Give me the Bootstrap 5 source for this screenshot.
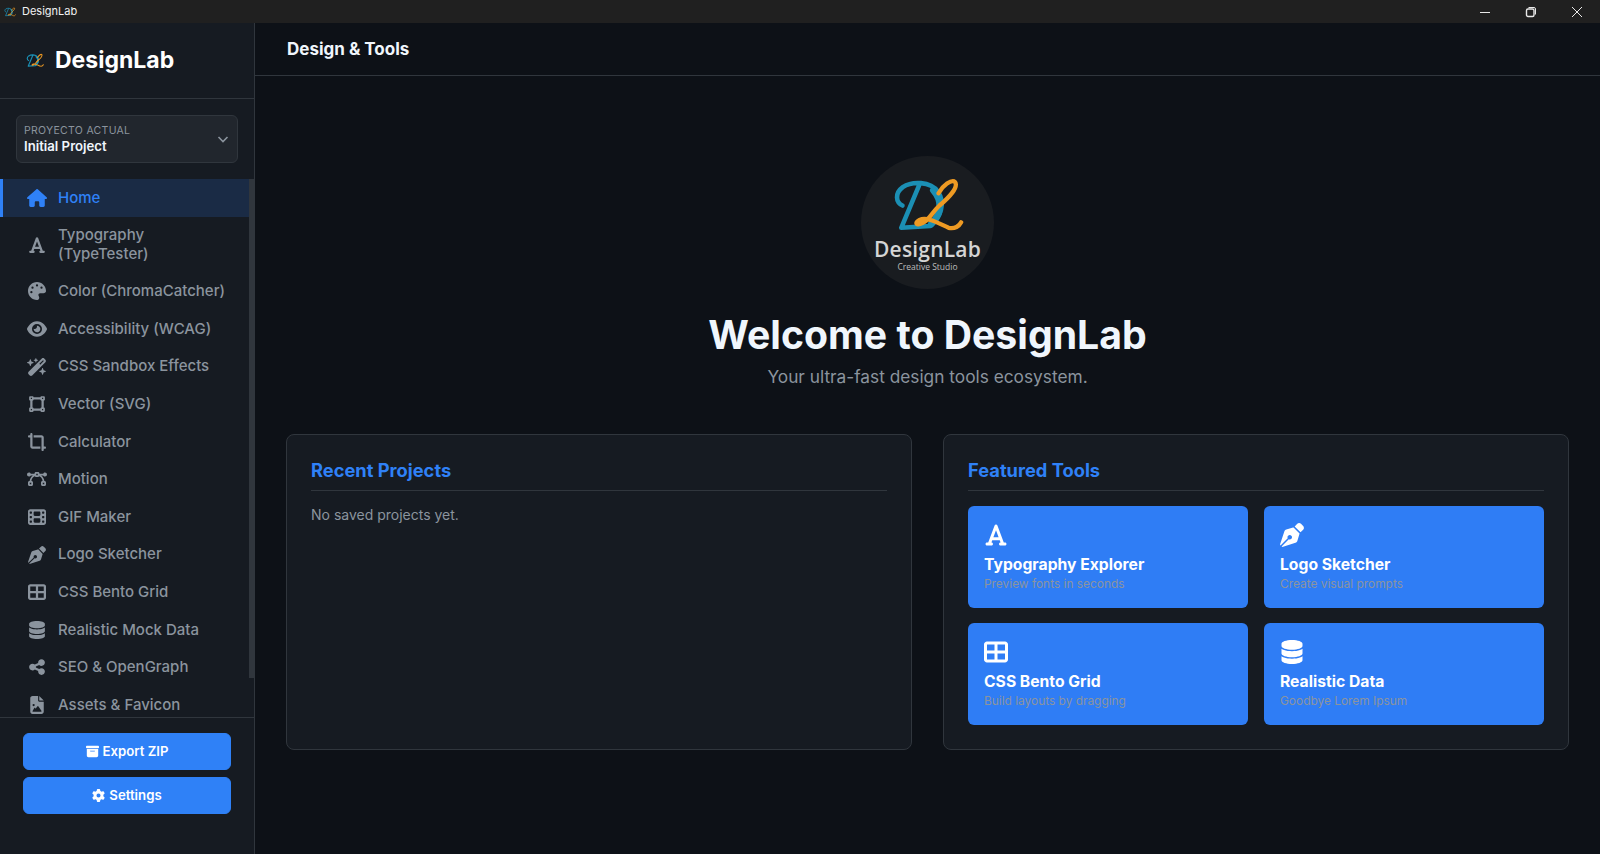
<!DOCTYPE html>
<html lang="en">
<head>
    <meta charset="UTF-8">
    <meta name="viewport" content="width=device-width, initial-scale=1.0">
    <title>DesignLab</title>
    <link href="https://cdn.jsdelivr.net/npm/bootstrap@5.3.0/dist/css/bootstrap.min.css" rel="stylesheet">
    <style>
        html, body { height: 100%; }
        body { background: #0d1117; color: #e6edf3; font-family: Inter, "Liberation Sans", sans-serif; overflow: hidden; }
        .ico { width: 1em; height: 1em; fill: currentColor; flex: none; }

        .titlebar { height: 23px; background: #202020; font-size: 11px; color: #f2f2f2; }
        .titlebar .brand-mini { width: 12px; height: 10px; margin: 0 6px 0 4px; }
        .win-btn { width: 46px; height: 23px; color: #e8e8e8; }
        .win-btn svg { width: 12px; height: 12px; fill: none; stroke: currentColor; stroke-width: 1; }

        .app { height: calc(100% - 23px); }
        .sidebar { width: 255px; background: #161b22; border-right: 1px solid #30363d; }
        .side-head { height: 76px; padding-left: 26px; gap: 11px; border-bottom: 1px solid #30363d; }
        .side-head .brand-mini { width: 18px; height: 15px; }
        .side-head span { font-size: 23px; font-weight: 700; color: #fff; }
        .project-wrap { padding: 16px 16px 16px; }
        .project { height: 48px; padding: 0 8px 0 7px; background: #21262d; border: 1px solid #30363d; border-radius: 6px; }
        .project small { display: block; font-size: 10.5px; line-height: 13px; letter-spacing: .3px; color: #8b949e; }
        .project strong { display: block; font-size: 13.2px; line-height: 18px; font-weight: 600; color: #f0f6fc; }
        .project svg { width: 12px; height: 12px; fill: none; stroke: #8b949e; stroke-width: 1.6; }

        .nav-wrap { flex: 1 1 0; min-height: 0; overflow: hidden; }
        .nav-wrap .side-nav { flex-wrap: nowrap; }
        .scroll-thumb { top: 0; right: 0; width: 5px; height: 499px; background: #30363d; }
        .side-nav .nav-link { display: flex; align-items: center; gap: 11px; padding: 9.6px 29px 9.6px 24px; flex: none; font-size: 15px; line-height: 18.4px; font-weight: 500; color: #8b949e; border-left: 3px solid transparent; }
        .side-nav .nav-link .ico { width: 20px; height: 18px; }
        .side-nav .nav-link.active { color: #2f81f7; background: #1a2b45; border-left-color: #2f81f7; }

        .side-foot { border-top: 1px solid #30363d; padding: 15px 23px 40px; gap: 7px; }
        .btn-brand { --bs-btn-bg: #2f81f7; --bs-btn-border-color: #2f81f7; --bs-btn-hover-bg: #2f81f7; --bs-btn-hover-border-color: #2f81f7; --bs-btn-color: #fff; --bs-btn-hover-color: #fff; height: 37px; font-size: 13.2px; font-weight: 600; padding: 0; border-radius: 6px; gap: 4px; }
        .btn-brand .ico { width: 13px; height: 13px; }

        .top-head { height: 53px; padding-left: 32px; border-bottom: 1px solid #30363d; }
        .top-head h2 { font-size: 17px; font-weight: 700; margin: 0; color: #f0f6fc; }
        .content { padding: 80px 31px 0; }

        .logo-disc { width: 133px; height: 133px; border-radius: 50%; background: #191c20; padding-top: 4px; }
        .logo-disc svg { width: 72px; height: 55px; }
        .logo-name { font-family: "Open Sans", sans-serif; font-size: 21px; line-height: 24px; font-weight: 600; letter-spacing: .2px; color: #d4d4d4; margin-top: 4px; }
        .logo-sub { font-family: "Open Sans", sans-serif; font-size: 8.5px; line-height: 11px; color: #bdbdbd; }
        .hero h1 { font-size: 39.2px; line-height: 48px; font-weight: 700; margin: 22px 0 0; color: #f0f6fc; }
        .hero p { font-size: 17.3px; line-height: 24px; margin: 6px 0 0; color: #8b949e; }

        .panels { --bs-gutter-x: 31px; margin-top: 45px; }
        .panel { height: 316px; padding: 25px 24px 24px; background: #161b22; border: 1px solid #30363d; border-radius: 8px; }
        .panel h3 { font-size: 18.3px; line-height: 21.6px; font-weight: 700; color: #2f81f7; padding-bottom: 8px; margin-bottom: 15px; border-bottom: 1px solid #30363d; }
        .panel p { font-size: 14px; color: #8b949e; margin: -2px 0 0; }

        .tools { --bs-gutter-x: 16px; --bs-gutter-y: 15px; }
        .tool { height: 102px; padding: 17px 16px 0; background: #2f7df5; border-radius: 6px; color: #fff; }
        .tool .ico { display: block; width: 24px; height: 24px; }
        .tool h4 { font-size: 15.7px; line-height: 20px; font-weight: 700; margin: 8px 0 0; }
        .tool small { display: block; font-size: 11.9px; line-height: 16px; margin-top: 1px; color: #8b949e; }
    </style>
</head>
<body>
    <!-- iconos -->
    <svg class="d-none" xmlns="http://www.w3.org/2000/svg">
        <symbol id="i-home" viewBox="0 0 576 512"><path d="M575.8 255.5c0 18-13.5 32.1-32 32.1h-32l.7 160.2c0 2.7-.2 5.4-.5 8.1V472c0 22.1-17.9 40-40 40H456c-1.1 0-2.2 0-3.3-.1c-1.4 .1-2.8 .1-4.2 .1H416 392c-22.1 0-40-17.9-40-40V448 384c0-17.7-14.3-32-32-32H256c-17.7 0-32 14.3-32 32v64 24c0 22.1-17.9 40-40 40H160 128.1c-1.5 0-3-.1-4.5-.2c-1.2 .1-2.4 .2-3.6 .2H104c-22.1 0-40-17.9-40-40V360c0-.9 0-1.9 .1-2.8V287.6H32c-18 0-32-14-32-32.1c0-9 3-17 10-24L266.4 8c7-7 15-8 22-8s15 2 21 7L564.8 231.5c8 7 12 15 11 24z"/></symbol>
        <symbol id="i-font" viewBox="0 0 448 512"><path d="M254 52.8C249.3 40.3 237.3 32 224 32s-25.3 8.3-30 20.8L57.8 416H32c-17.7 0-32 14.3-32 32s14.3 32 32 32h96c17.7 0 32-14.3 32-32s-14.3-32-32-32h-1.8l18-48H303.8l18 48H320c-17.7 0-32 14.3-32 32s14.3 32 32 32h96c17.7 0 32-14.3 32-32s-14.3-32-32-32H390.2L254 52.8zM279.8 304H168.2L224 155.1 279.8 304z"/></symbol>
        <symbol id="i-palette" viewBox="0 0 512 512"><path d="M512 256c0 .9 0 1.8 0 2.7c-.4 36.5-33.6 61.3-70.1 61.3H344c-26.5 0-48 21.5-48 48c0 3.4 .4 6.7 1 9.9c2.1 10.2 6.5 20 10.8 29.9c6.1 13.8 12.1 27.5 12.1 42c0 31.8-21.6 60.7-53.4 62c-3.5 .1-7 .2-10.6 .2C114.6 512 0 397.4 0 256S114.6 0 256 0S512 114.6 512 256zM128 288a32 32 0 1 0 -64 0 32 32 0 1 0 64 0zm0-96a32 32 0 1 0 0-64 32 32 0 1 0 0 64zM288 96a32 32 0 1 0 -64 0 32 32 0 1 0 64 0zm96 96a32 32 0 1 0 0-64 32 32 0 1 0 0 64z"/></symbol>
        <symbol id="i-eye" viewBox="0 0 576 512"><path d="M288 32c-80.8 0-145.5 36.8-192.6 80.6C48.6 156 17.3 208 2.5 243.7c-3.3 7.9-3.3 16.7 0 24.6C17.3 304 48.6 356 95.4 399.4C142.5 443.2 207.2 480 288 480s145.5-36.8 192.6-80.6c46.8-43.5 78.1-95.4 93-131.1c3.3-7.9 3.3-16.7 0-24.6c-14.9-35.7-46.2-87.7-93-131.1C433.5 68.8 368.8 32 288 32zM144 256a144 144 0 1 1 288 0 144 144 0 1 1 -288 0zm144-64c0 35.3-28.7 64-64 64c-7.1 0-13.9-1.2-20.3-3.3c-5.5-1.8-11.9 1.6-11.7 7.4c.3 6.9 1.3 13.8 3.2 20.7c13.7 51.2 66.4 81.6 117.6 67.9s81.6-66.4 67.9-117.6c-11.1-41.5-47.8-69.4-88.6-71.1c-5.8-.2-9.2 6.1-7.4 11.7c2.1 6.4 3.3 13.2 3.3 20.3z"/></symbol>
        <symbol id="i-wand" viewBox="0 0 576 512"><path d="M234.7 42.7L197 56.8c-3 1.1-5 4-5 7.2s2 6.1 5 7.2l37.7 14.1L248.8 123c1.1 3 4 5 7.2 5s6.1-2 7.2-5l14.1-37.7L315 71.2c3-1.1 5-4 5-7.2s-2-6.1-5-7.2L277.3 42.7 263.2 5c-1.1-3-4-5-7.2-5s-6.1 2-7.2 5L234.7 42.7zM46.1 395.4c-18.7 18.7-18.7 49.1 0 67.9l34.6 34.6c18.7 18.7 49.1 18.7 67.9 0L529.9 116.5c18.7-18.7 18.7-49.1 0-67.9L495.3 14.1c-18.7-18.7-49.1-18.7-67.9 0L46.1 395.4zM484.6 82.6l-105 105-23.3-23.3 105-105 23.3 23.3zM7.5 117.2C3 118.9 0 123.2 0 128s3 9.1 7.5 10.8L64 160l21.2 56.5c1.7 4.5 6 7.5 10.8 7.5s9.1-3 10.8-7.5L128 160l56.5-21.2c4.5-1.7 7.5-6 7.5-10.8s-3-9.1-7.5-10.8L128 96 106.8 39.5C105.1 35 100.8 32 96 32s-9.1 3-10.8 7.5L64 96 7.5 117.2zm352 256c-4.5 1.7-7.5 6-7.5 10.8s3 9.1 7.5 10.8L416 416l21.2 56.5c1.7 4.5 6 7.5 10.8 7.5s9.1-3 10.8-7.5L480 416l56.5-21.2c4.5-1.7 7.5-6 7.5-10.8s-3-9.1-7.5-10.8L480 352l-21.2-56.5c-1.7-4.5-6-7.5-10.8-7.5s-9.1 3-10.8 7.5L416 352l-56.5 21.2z"/></symbol>
        <symbol id="i-vector" viewBox="0 0 448 512"><path d="M368 80h32v32H368V80zM352 32c-17.7 0-32 14.3-32 32H128c0-17.7-14.3-32-32-32H32C14.3 32 0 46.3 0 64v64c0 17.7 14.3 32 32 32V352c-17.7 0-32 14.3-32 32v64c0 17.7 14.3 32 32 32H96c17.7 0 32-14.3 32-32H320c0 17.7 14.3 32 32 32h64c17.7 0 32-14.3 32-32V384c0-17.7-14.3-32-32-32V160c17.7 0 32-14.3 32-32V64c0-17.7-14.3-32-32-32H352zM96 160c17.7 0 32-14.3 32-32H320c0 17.7 14.3 32 32 32V352c-17.7 0-32 14.3-32 32H128c0-17.7-14.3-32-32-32V160zM48 400H80v32H48V400zm320 32V400h32v32H368zM48 112V80H80v32H48z"/></symbol>
        <symbol id="i-crop" viewBox="0 0 512 512"><path d="M128 32c0-17.7-14.3-32-32-32S64 14.3 64 32V64H32C14.3 64 0 78.3 0 96s14.3 32 32 32H64V384c0 35.3 28.7 64 64 64H352V384H128V32zM384 480c0 17.7 14.3 32 32 32s32-14.3 32-32V448h32c17.7 0 32-14.3 32-32s-14.3-32-32-32H448l0-256c0-35.3-28.7-64-64-64L160 64v64l224 0 0 352z"/></symbol>
        <symbol id="i-bezier" viewBox="0 0 640 512"><path d="M296 136V88h48v48H296zM288 32c-26.5 0-48 21.5-48 48v4H121.6C111.2 62.7 89.3 48 64 48C28.7 48 0 76.7 0 112s28.7 64 64 64c25.3 0 47.2-14.7 57.6-36h66.9c-58.9 39.6-98.9 105-104 180H80c-26.5 0-48 21.5-48 48v64c0 26.5 21.5 48 48 48h64c26.5 0 48-21.5 48-48V368c0-26.5-21.5-48-48-48h-3.3c5.9-67 48.5-123.4 107.5-149.1c8.6 12.7 23.2 21.1 39.8 21.1h64c16.6 0 31.1-8.4 39.8-21.1c59 25.7 101.6 82.1 107.5 149.1H496c-26.5 0-48 21.5-48 48v64c0 26.5 21.5 48 48 48h64c26.5 0 48-21.5 48-48V368c0-26.5-21.5-48-48-48h-4.7c-5-75-45.1-140.4-104-180h66.9c10.4 21.3 32.3 36 57.6 36c35.3 0 64-28.7 64-64s-28.7-64-64-64c-25.3 0-47.2 14.7-57.6 36H400V80c0-26.5-21.5-48-48-48H288zM88 376h48v48H88V376zm416 48V376h48v48H504z"/></symbol>
        <symbol id="i-film" viewBox="0 0 512 512"><path d="M0 96C0 60.7 28.7 32 64 32H448c35.3 0 64 28.7 64 64V416c0 35.3-28.7 64-64 64H64c-35.3 0-64-28.7-64-64V96zM48 368v32c0 8.8 7.2 16 16 16H96c8.8 0 16-7.2 16-16V368c0-8.8-7.2-16-16-16H64c-8.8 0-16 7.2-16 16zm368-16c-8.8 0-16 7.2-16 16v32c0 8.8 7.2 16 16 16h32c8.8 0 16-7.2 16-16V368c0-8.8-7.2-16-16-16H416zM48 240v32c0 8.8 7.2 16 16 16H96c8.8 0 16-7.2 16-16V240c0-8.8-7.2-16-16-16H64c-8.8 0-16 7.2-16 16zm368-16c-8.8 0-16 7.2-16 16v32c0 8.8 7.2 16 16 16h32c8.8 0 16-7.2 16-16V240c0-8.8-7.2-16-16-16H416zM48 112v32c0 8.8 7.2 16 16 16H96c8.8 0 16-7.2 16-16V112c0-8.8-7.2-16-16-16H64c-8.8 0-16 7.2-16 16zM416 96c-8.8 0-16 7.2-16 16v32c0 8.8 7.2 16 16 16h32c8.8 0 16-7.2 16-16V112c0-8.8-7.2-16-16-16H416zM160 128v64c0 17.7 14.3 32 32 32H320c17.7 0 32-14.3 32-32V128c0-17.7-14.3-32-32-32H192c-17.7 0-32 14.3-32 32zm32 160c-17.7 0-32 14.3-32 32v64c0 17.7 14.3 32 32 32H320c17.7 0 32-14.3 32-32V320c0-17.7-14.3-32-32-32H192z"/></symbol>
        <symbol id="i-pen" viewBox="0 0 512 512"><path d="M368.4 18.3L312.7 74.1 437.9 199.3l55.7-55.7c21.9-21.9 21.9-57.3 0-79.2L447.6 18.3c-21.9-21.9-57.3-21.9-79.2 0zM288 94.6l-9.2 2.8L134.7 140.6c-19.9 6-35.7 21.2-42.3 41L3.8 445.8c-3.8 11.3-1 23.9 7.3 32.4L164.7 324.7c-3-6.3-4.7-13.3-4.7-20.7c0-26.5 21.5-48 48-48s48 21.5 48 48s-21.5 48-48 48c-7.4 0-14.4-1.7-20.7-4.7L33.7 500.9c8.6 8.3 21.1 11.2 32.4 7.3l264.3-88.6c19.7-6.6 35-22.4 41-42.3l43.2-144.1 2.8-9.2L288 94.6z"/></symbol>
        <symbol id="i-grid" viewBox="0 0 512 512"><path d="M448 96V224H288V96H448zm0 192V416H288V288H448zM224 224H64V96H224V224zM64 288H224V416H64V288zM64 32C28.7 32 0 60.7 0 96V416c0 35.3 28.7 64 64 64H448c35.3 0 64-28.7 64-64V96c0-35.3-28.7-64-64-64H64z"/></symbol>
        <symbol id="i-db" viewBox="0 0 448 512"><path d="M448 80v48c0 44.2-100.3 80-224 80S0 172.2 0 128V80C0 35.8 100.3 0 224 0S448 35.8 448 80zM393.2 214.7c20.8-7.4 39.9-16.9 54.8-28.6V288c0 44.2-100.3 80-224 80S0 332.2 0 288V186.1c14.9 11.8 34 21.2 54.8 28.6C99.7 230.7 159.5 240 224 240s124.3-9.3 169.2-25.3zM0 346.1c14.9 11.8 34 21.2 54.8 28.6C99.7 390.7 159.5 400 224 400s124.3-9.3 169.2-25.3c20.8-7.4 39.9-16.9 54.8-28.6V432c0 44.2-100.3 80-224 80S0 476.2 0 432V346.1z"/></symbol>
        <symbol id="i-share" viewBox="0 0 448 512"><path d="M352 224c53 0 96-43 96-96s-43-96-96-96s-96 43-96 96c0 4 .2 8 .7 11.9l-94.1 47C145.4 170.2 121.9 160 96 160c-53 0-96 43-96 96s43 96 96 96c25.9 0 49.4-10.2 66.6-26.9l94.1 47c-.5 3.9-.7 7.8-.7 11.9c0 53 43 96 96 96s96-43 96-96s-43-96-96-96c-25.9 0-49.4 10.2-66.6 26.9l-94.1-47c.5-3.9 .7-7.8 .7-11.9s-.2-8-.7-11.9l94.1-47C302.6 213.8 326.1 224 352 224z"/></symbol>
        <symbol id="i-file" viewBox="0 0 384 512"><path d="M64 0C28.7 0 0 28.7 0 64V448c0 35.3 28.7 64 64 64H320c35.3 0 64-28.7 64-64V160H256c-17.7 0-32-14.3-32-32V0H64zM256 0V128H384L256 0zM64 256a32 32 0 1 1 64 0 32 32 0 1 1 -64 0zm152 32c5.3 0 10.2 2.6 13.2 6.9l88 128c3.4 4.9 3.7 11.3 1 16.5s-8.2 8.6-14.2 8.6H216 176 128 80c-5.8 0-11.1-3.1-13.9-8.1s-2.8-11.2 .2-16.1l48-80c2.9-4.8 8.1-7.8 13.7-7.8s10.8 2.9 13.7 7.8l12.8 21.4 48.3-70.2c3-4.3 7.9-6.9 13.2-6.9z"/></symbol>
        <symbol id="i-box" viewBox="0 0 512 512"><path d="M32 32H480c17.7 0 32 14.3 32 32V96c0 17.7-14.3 32-32 32H32C14.3 128 0 113.7 0 96V64C0 46.3 14.3 32 32 32zm0 128H480V416c0 35.3-28.7 64-64 64H96c-35.3 0-64-28.7-64-64V160zm128 80c0 8.8 7.2 16 16 16H336c8.8 0 16-7.2 16-16s-7.2-16-16-16H176c-8.8 0-16 7.2-16 16z"/></symbol>
        <symbol id="i-gear" viewBox="0 0 512 512"><path d="M495.9 166.6c3.2 8.7 .5 18.4-6.4 24.6l-43.3 39.4c1.1 8.3 1.7 16.8 1.7 25.4s-.6 17.1-1.7 25.4l43.3 39.4c6.9 6.2 9.6 15.9 6.4 24.6c-4.4 11.9-9.7 23.3-15.8 34.3l-4.7 8.1c-6.6 11-14 21.4-22.1 31.2c-5.9 7.2-15.7 9.6-24.5 6.8l-55.7-17.7c-13.4 10.3-28.2 18.9-44 25.4l-12.5 57.1c-2 9.1-9 16.3-18.2 17.8c-13.8 2.3-28 3.5-42.5 3.5s-28.7-1.2-42.5-3.5c-9.2-1.5-16.2-8.7-18.2-17.8l-12.5-57.1c-15.8-6.5-30.6-15.1-44-25.4L83.1 425.9c-8.8 2.8-18.6 .3-24.5-6.8c-8.1-9.8-15.5-20.2-22.1-31.2l-4.7-8.1c-6.1-11-11.4-22.4-15.8-34.3c-3.2-8.7-.5-18.4 6.4-24.6l43.3-39.4C64.6 273.1 64 264.6 64 256s.6-17.1 1.7-25.4L22.4 191.2c-6.9-6.2-9.6-15.9-6.4-24.6c4.4-11.9 9.7-23.3 15.8-34.3l4.7-8.1c6.6-11 14-21.4 22.1-31.2c5.9-7.2 15.7-9.6 24.5-6.8l55.7 17.7c13.4-10.3 28.2-18.9 44-25.4l12.5-57.1c2-9.1 9-16.3 18.2-17.8C227.3 1.2 241.5 0 256 0s28.7 1.2 42.5 3.5c9.2 1.5 16.2 8.7 18.2 17.8l12.5 57.1c15.8 6.5 30.6 15.1 44 25.4l55.7-17.7c8.8-2.8 18.6-.3 24.5 6.8c8.1 9.8 15.5 20.2 22.1 31.2l4.7 8.1c6.1 11 11.4 22.4 15.8 34.3zM256 336a80 80 0 1 0 0-160 80 80 0 1 0 0 160z"/></symbol>
        <symbol id="i-logo" viewBox="210 115 235 180">
            <g fill="none" stroke-linecap="round" stroke-linejoin="round">
                <path d="M244 205C222 195 218 165 245 145C275 125 335 125 360 160C385 195 370 245 335 272L240 278L298 140" stroke="#1b8fb4" stroke-width="15"/>
                <path d="M345 155C376 190 372 232 338 266" stroke="#1b8fb4" stroke-width="22"/>
                <path d="M362 165C375 140 405 118 416 128C428 145 395 180 365 205C340 228 330 255 310 262C285 275 285 260 300 252C325 240 365 265 395 278C415 283 430 272 436 260" stroke="#ee9a23" stroke-width="14"/>
            </g>
        </symbol>
    </svg>

    <!-- Barra de titulo -->
    <div class="titlebar d-flex align-items-center">
        <svg class="brand-mini"><use href="#i-logo"/></svg>
        <span class="flex-grow-1">DesignLab</span>
        <div class="win-btn d-flex align-items-center justify-content-center"><svg viewBox="0 0 12 12"><path d="M1 6.5h10"/></svg></div>
        <div class="win-btn d-flex align-items-center justify-content-center"><svg viewBox="0 0 12 12"><rect x="1.5" y="3" width="7.5" height="7.5" rx="1.5" stroke-width="1.4"/><path d="M3.5 1.500h5.500a1.500 1.500 0 0 1 1.500 1.500v5.500"/></svg></div>
        <div class="win-btn d-flex align-items-center justify-content-center"><svg viewBox="0 0 12 12"><path d="M1 1l10 10M11 1L1 11"/></svg></div>
    </div>

    <div class="app d-flex">
        <!-- Sidebar -->
        <aside class="sidebar d-flex flex-column flex-shrink-0">
            <div class="side-head d-flex align-items-center flex-shrink-0">
                <svg class="brand-mini"><use href="#i-logo"/></svg>
                <span>DesignLab</span>
            </div>
            <div class="project-wrap flex-shrink-0">
                <div class="project d-flex align-items-center justify-content-between">
                    <div>
                        <small>PROYECTO ACTUAL</small>
                        <strong>Initial Project</strong>
                    </div>
                    <svg viewBox="0 0 12 12"><path d="M1.500 4l4.500 4.500L10.500 4"/></svg>
                </div>
            </div>
            <div class="nav-wrap position-relative">
                <nav class="nav flex-column side-nav">
                    <a class="nav-link active" href="#"><svg class="ico"><use href="#i-home"/></svg>Home</a>
                    <a class="nav-link" href="#"><svg class="ico"><use href="#i-font"/></svg>Typography (TypeTester)</a>
                    <a class="nav-link" href="#"><svg class="ico"><use href="#i-palette"/></svg>Color (ChromaCatcher)</a>
                    <a class="nav-link" href="#"><svg class="ico"><use href="#i-eye"/></svg>Accessibility (WCAG)</a>
                    <a class="nav-link" href="#"><svg class="ico"><use href="#i-wand"/></svg>CSS Sandbox Effects</a>
                    <a class="nav-link" href="#"><svg class="ico"><use href="#i-vector"/></svg>Vector (SVG)</a>
                    <a class="nav-link" href="#"><svg class="ico"><use href="#i-crop"/></svg>Calculator</a>
                    <a class="nav-link" href="#"><svg class="ico"><use href="#i-bezier"/></svg>Motion</a>
                    <a class="nav-link" href="#"><svg class="ico"><use href="#i-film"/></svg>GIF Maker</a>
                    <a class="nav-link" href="#"><svg class="ico"><use href="#i-pen"/></svg>Logo Sketcher</a>
                    <a class="nav-link" href="#"><svg class="ico"><use href="#i-grid"/></svg>CSS Bento Grid</a>
                    <a class="nav-link" href="#"><svg class="ico"><use href="#i-db"/></svg>Realistic Mock Data</a>
                    <a class="nav-link" href="#"><svg class="ico"><use href="#i-share"/></svg>SEO &amp; OpenGraph</a>
                    <a class="nav-link" href="#"><svg class="ico"><use href="#i-file"/></svg>Assets &amp; Favicon</a>
                </nav>
                <div class="scroll-thumb position-absolute"></div>
            </div>
            <div class="side-foot d-flex flex-column flex-shrink-0">
                <button class="btn btn-brand d-flex align-items-center justify-content-center"><svg class="ico"><use href="#i-box"/></svg>Export ZIP</button>
                <button class="btn btn-brand d-flex align-items-center justify-content-center"><svg class="ico"><use href="#i-gear"/></svg>Settings</button>
            </div>
        </aside>

        <!-- Contenido -->
        <main class="flex-grow-1 d-flex flex-column">
            <header class="top-head d-flex align-items-center flex-shrink-0"><h2>Design &amp; Tools</h2></header>
            <div class="content flex-grow-1">
                <div class="hero d-flex flex-column align-items-center text-center">
                    <div class="logo-disc d-flex flex-column align-items-center justify-content-center">
                        <svg><use href="#i-logo"/></svg>
                        <div class="logo-name">DesignLab</div>
                        <div class="logo-sub">Creative Studio</div>
                    </div>
                    <h1>Welcome to DesignLab</h1>
                    <p>Your ultra-fast design tools ecosystem.</p>
                </div>
                <div class="row panels">
                    <div class="col-6">
                        <div class="panel">
                            <h3>Recent Projects</h3>
                            <p>No saved projects yet.</p>
                        </div>
                    </div>
                    <div class="col-6">
                        <div class="panel">
                            <h3>Featured Tools</h3>
                            <div class="row tools">
                                <div class="col-6"><div class="tool"><svg class="ico"><use href="#i-font"/></svg><h4>Typography Explorer</h4><small>Preview fonts in seconds</small></div></div>
                                <div class="col-6"><div class="tool"><svg class="ico"><use href="#i-pen"/></svg><h4>Logo Sketcher</h4><small>Create visual prompts</small></div></div>
                                <div class="col-6"><div class="tool"><svg class="ico"><use href="#i-grid"/></svg><h4>CSS Bento Grid</h4><small>Build layouts by dragging</small></div></div>
                                <div class="col-6"><div class="tool"><svg class="ico"><use href="#i-db"/></svg><h4>Realistic Data</h4><small>Goodbye Lorem Ipsum</small></div></div>
                            </div>
                        </div>
                    </div>
                </div>
            </div>
        </main>
    </div>
</body>
</html>
